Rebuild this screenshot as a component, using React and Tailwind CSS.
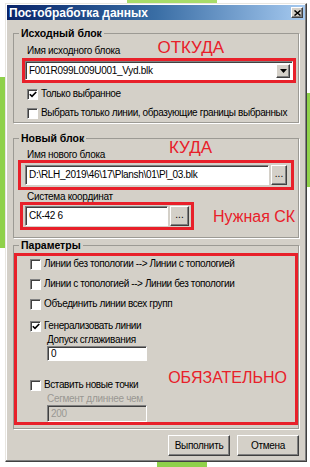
import React from "react";

const font = { fontFamily: '"Liberation Sans", Arial, sans-serif' };

function Check({ checked }) {
  return (
    <span className="w-[11px] h-[11px] shrink-0 bg-white border border-t-[#808080] border-l-[#808080] border-r-white border-b-white shadow-[inset_1px_1px_0_#404040] flex items-center justify-center">
      {checked && (
        <svg width="8" height="7" viewBox="0 0 8 7">
          <path d="M0.8 3.2 L3 5.4 L7.2 1" stroke="#000" strokeWidth="1.6" fill="none" />
        </svg>
      )}
    </span>
  );
}

function CheckRow({ checked, children, className = "" }) {
  return (
    <div className={`flex items-center h-[16px] gap-[3px] ${className}`}>
      <Check checked={checked} />
      <span className="text-[10px] leading-none tracking-[-0.4px] text-black whitespace-nowrap">{children}</span>
    </div>
  );
}

function Sunken({ className = "", children, disabled }) {
  return (
    <div
      className={`flex items-center border border-t-[#808080] border-l-[#808080] border-r-white border-b-white shadow-[inset_1px_1px_0_#404040] pl-[3px] text-[10px] leading-none tracking-[-0.3px] ${
        disabled ? "bg-[#d4d0c8] text-[#9a9893]" : "bg-white text-black"
      } ${className}`}
    >
      {children}
    </div>
  );
}

function Raised({ className = "", children }) {
  return (
    <div
      className={`flex items-center justify-center bg-[#d4d0c8] border border-t-white border-l-white border-r-[#404040] border-b-[#404040] shadow-[inset_-1px_-1px_0_#808080] ${className}`}
    >
      {children}
    </div>
  );
}

function Group({ title, className = "", children }) {
  return (
    <fieldset className={`border border-[#9c9a94] shadow-[1px_1px_0_#fff] mx-[6px] ${className}`}>
      <legend className="ml-[5px] px-[2px] text-[10.5px] font-bold leading-[12px] text-black">{title}</legend>
      {children}
    </fieldset>
  );
}

export default function App() {
  return (
    <div className="relative w-[310px] h-[467px] bg-white overflow-hidden" style={font}>
      {/* bits of the desktop around the dialog */}
      <div className="absolute left-0 top-[77px] w-[5px] h-[171px] bg-[#8fd14a]" />
      <div className="absolute right-0 top-[93px] w-[4px] h-[94px] bg-[#8fd14a]" />
      <div className="absolute left-[127px] top-0 w-[90px] h-[3px] bg-[#a8dc6a]" />
      <div className="absolute left-[157px] bottom-0 w-[50px] h-[5px] bg-[#8fd14a]" />

      <div className="relative ml-[5px] mt-[3px] w-[302px] h-[459px] bg-[#d4d0c8] border border-t-[#e8e6e1] border-l-[#e8e6e1] border-r-[#404040] border-b-[#404040] shadow-[inset_-1px_-1px_0_#808080,inset_1px_1px_0_#fff] p-[1px] flex flex-col">
        {/* title bar */}
        <div className="h-[15px] flex items-center justify-between bg-gradient-to-r from-[#0a246a] via-[#3a6ea5] to-[#a6caf0] pl-[2px] pr-[2px]">
          <span className="text-white text-[12px] font-bold leading-none">Постобработка данных</span>
          <Raised className="w-[12px] h-[11px]">
            <svg width="7" height="6" viewBox="0 0 7 6">
              <path d="M0.5 0.5 L6.5 5.5 M6.5 0.5 L0.5 5.5" stroke="#000" strokeWidth="1.5" />
            </svg>
          </Raised>
        </div>

        {/* Исходный блок */}
        <Group title="Исходный блок" className="mt-[7px] h-[96px]">
          <div className="flex items-end h-[19px] pl-[13px]">
            <span className="text-[10px] leading-none tracking-[-0.3px] text-black mb-[2px]">Имя исходного блока</span>
            <span className="ml-auto mr-[74px] text-[17px] leading-none text-[#e8202a] mb-[2px]">ОТКУДА</span>
          </div>
          <div className="ml-[8px] mr-[2px] border-[3px] border-[#e8202a] p-0">
            <Sunken className="h-[19px] justify-between pr-[2px]">
              <span>F001R099L009U001_Vyd.blk</span>
              <Raised className="w-[14px] h-[14px]">
                <svg width="7" height="4" viewBox="0 0 7 4">
                  <path d="M0 0 L7 0 L3.5 4 Z" fill="#000" />
                </svg>
              </Raised>
            </Sunken>
          </div>
          <CheckRow checked className="pl-[13px] mt-[3px]">Только выбранное</CheckRow>
          <CheckRow className="pl-[13px] mt-[3px]">Выбрать только линии, образующие границы выбранных</CheckRow>
        </Group>

        {/* Новый блок */}
        <Group title="Новый блок" className="mt-[9px] h-[106px]">
          <div className="flex items-end h-[16px] pl-[13px]">
            <span className="text-[10px] leading-none tracking-[-0.3px] text-black">Имя нового блока</span>
            <span className="ml-auto mr-[86px] text-[17px] leading-none text-[#e8202a] -mt-[4px] mb-[4px]">КУДА</span>
          </div>
          <div className="ml-[4px] mr-[4px] border-[3px] border-[#e8202a] px-[4px] py-[2px] flex gap-[2px]">
            <Sunken className="h-[20px] flex-1">D:\RLH_2019\46\17\Plansh\01\Pl_03.blk</Sunken>
            <Raised className="w-[16px] h-[20px] text-[10px] leading-none pb-[3px]">...</Raised>
          </div>
          <div className="pl-[13px] h-[11px] mt-[1px] text-[10px] leading-[11px] tracking-[-0.3px] text-black">Система координат</div>
          <div className="flex items-center">
            <div className="ml-[6px] w-[174px] border-[3px] border-[#e8202a] px-[2px] py-[1px] flex gap-[2px]">
              <Sunken className="h-[20px] flex-1">СК-42 6</Sunken>
              <Raised className="w-[19px] h-[20px] text-[10px] leading-none pb-[3px]">...</Raised>
            </div>
            <span className="ml-[19px] text-[16px] leading-none text-[#e8202a] mt-[2px]">Нужная СК</span>
          </div>
        </Group>

        {/* Параметры */}
        <Group title="Параметры" className="mt-[1px] h-[190px]">
          <div className="mt-[2px] h-[172px] border-[3px] border-[#e8202a] pl-[13px] flex flex-col">
            <CheckRow>Линии без топологии --&gt; Линии с топологией</CheckRow>
            <CheckRow className="mt-[4px]">Линии с топологией --&gt; Линии без топологии</CheckRow>
            <CheckRow className="mt-[4px]">Объединить линии всех групп</CheckRow>
            <CheckRow checked className="mt-[6px]">Генерализовать линии</CheckRow>
            <div className="pl-[17px] text-[10px] leading-[11px] tracking-[-0.3px] text-black">Допуск сглаживания</div>
            <Sunken className="ml-[17px] w-[100px] h-[15px] mt-[1px]">0</Sunken>
            <div className="flex items-start mt-[16px]">
              <CheckRow>Вставить новые точки</CheckRow>
              <span className="ml-auto mr-[8px] -mt-[7px] text-[16px] leading-none text-[#e8202a]">ОБЯЗАТЕЛЬНО</span>
            </div>
            <div className="pl-[17px] text-[10px] leading-[11px] tracking-[-0.3px] text-[#9a9893]">Сегмент длиннее чем</div>
            <Sunken disabled className="ml-[17px] w-[100px] h-[17px] mt-[1px]">200</Sunken>
          </div>
        </Group>

        {/* buttons */}
        <div className="flex justify-end gap-[7px] mt-[6px] mr-[6px]">
          <Raised className="w-[62px] h-[21px] text-[10px] tracking-[-0.3px] text-black">Выполнить</Raised>
          <Raised className="w-[62px] h-[21px] text-[10px] tracking-[-0.3px] text-black">Отмена</Raised>
        </div>
      </div>
    </div>
  );
}
